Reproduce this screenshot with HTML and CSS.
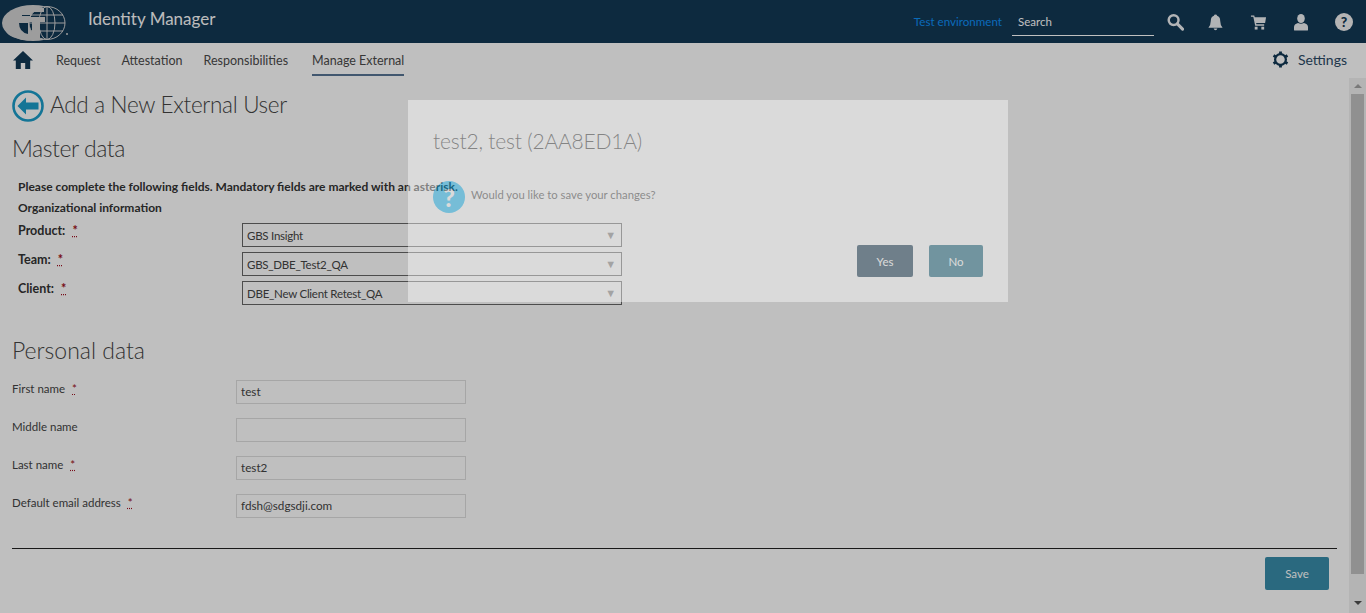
FILE: index.html
```html
<!DOCTYPE html>
<html lang="en">
<head>
    <meta charset="UTF-8">
    <meta name="viewport" content="width=device-width, initial-scale=1.0">
    <title>Identity Manager</title>
    <link rel="stylesheet" href="styles.css">
</head>
<body>
    <header class="topbar">
        <svg class="logo" viewBox="0 0 68 43" aria-hidden="true">
            <ellipse cx="33" cy="23" rx="31" ry="18" fill="#d2d2d2"/>
            <ellipse cx="47" cy="23" rx="18" ry="16.500" fill="#123855"/>
            <g fill="none" stroke="#d2d2d2" stroke-width="1">
                <ellipse cx="47" cy="23" rx="18" ry="16.500"/>
                <ellipse cx="47" cy="23" rx="8" ry="16.500"/>
                <path d="M47 7v32M31 15h32M29 23h36M31 31h32"/>
            </g>
            <path d="M18 8h26v4H30q-12 0-12 11t10 12l3 5q-8 1-15-2Q4 35 4 24 4 13 18 8z" fill="#d2d2d2"/>
            <path d="M20 17h5v-3h6v3h14v5H40v17h-8V22H20z" fill="#d2d2d2"/>
            <path d="M19 23h9v11q-9-2-9-11zM22 15h8v1h-8z" fill="#123855"/>
            <circle cx="67" cy="34" r="1" fill="#d2d2d2"/>
        </svg>
        <span class="app-name">Identity Manager</span>
        <div class="top-right">
            <span class="env">Test environment</span>
            <div class="search">Search</div>
            <svg class="top-icon search-icon" viewBox="0 0 18 18" aria-hidden="true">
                <circle cx="7" cy="7" r="5.200" fill="none" stroke="currentColor" stroke-width="2.600"/>
                <path d="M11 11l5.500 5.500" stroke="currentColor" stroke-width="3.200" stroke-linecap="round"/>
            </svg>
            <svg class="top-icon bell-icon" viewBox="0 0 18 18" aria-hidden="true">
                <path d="M9 1q1.500 0 1.700 1.500 3.300 1 3.300 5.500 0 4 2.500 7H1.500Q4 12 4 8q0-4.500 3.300-5.500Q7.500 1 9 1z" fill="currentColor"/>
                <path d="M7 16h4q-.5 1.800-2 1.800T7 16z" fill="currentColor"/>
            </svg>
            <svg class="top-icon cart-icon" viewBox="0 0 18 18" aria-hidden="true">
                <path d="M1 2h3.500l.5 2h12l-1 6H6.500l.3 1.500H15V13H5.500L3.500 3.500H1z" fill="currentColor"/>
                <rect x="5" y="14" width="3" height="3" fill="currentColor"/>
                <rect x="12" y="14" width="3" height="3" fill="currentColor"/>
            </svg>
            <svg class="top-icon user-icon" viewBox="0 0 14 18" aria-hidden="true">
                <ellipse cx="7" cy="5.500" rx="3.800" ry="4.500" fill="currentColor"/>
                <path d="M0 17v-3q0-3 4-4 3 1.500 6 0 4 1 4 4v3q0 .5-1 .5H1q-1 0-1-.5z" fill="currentColor"/>
            </svg>
            <span class="help-icon">?</span>
        </div>
    </header>

    <nav class="menu">
        <svg class="home" viewBox="0 0 20 18" aria-hidden="true">
            <path d="M10 0l10 9.500h-2.800V18h-5v-6H7.800v6h-5V9.500H0z" fill="#123855"/>
        </svg>
        <a class="menu-item">Request</a>
        <a class="menu-item">Attestation</a>
        <a class="menu-item wide">Responsibilities</a>
        <a class="menu-item active">Manage External</a>
        <div class="settings">
            <svg class="gear" viewBox="0 0 18 18" aria-hidden="true">
                <circle cx="9" cy="9" r="5.700" fill="none" stroke="#123855" stroke-width="2.400"/>
                <path d="M9 .5v3M9 14.500v3M1.600 4.700l2.600 1.500M13.800 11.800l2.600 1.500M1.600 13.300l2.600-1.500M13.800 6.200l2.600-1.500" stroke="#123855" stroke-width="3"/>
            </svg>
            <span>Settings</span>
        </div>
    </nav>

    <div class="body-row">
        <main class="content">
            <div class="page-title">
                <svg class="back" viewBox="0 0 32 32" aria-hidden="true">
                    <circle cx="16" cy="16" r="14.500" fill="none" stroke="#1b9cc9" stroke-width="2.600"/>
                    <path d="M5.500 16L14 7.500v5h12.500v7H14v5z" fill="#1b9cc9"/>
                </svg>
                <h1>Add a New External User</h1>
            </div>

            <h2 class="master">Master data</h2>
            <div class="org">
                <p class="strong">Please complete the following fields. Mandatory fields are marked with an asterisk.</p>
                <p class="strong org-head">Organizational information</p>
                <div class="org-grid">
                    <label class="strong">Product: <abbr title="Mandatory">*</abbr></label>
                    <div class="select"><span>GBS Insight</span><i>▼</i></div>
                    <label class="strong">Team: <abbr title="Mandatory">*</abbr></label>
                    <div class="select"><span>GBS_DBE_Test2_QA</span><i>▼</i></div>
                    <label class="strong">Client: <abbr title="Mandatory">*</abbr></label>
                    <div class="select"><span>DBE_New Client Retest_QA</span><i>▼</i></div>
                </div>
            </div>

            <h2 class="personal">Personal data</h2>
            <div class="person-grid">
                <label>First name <abbr title="Mandatory">*</abbr></label>
                <div class="field">test</div>
                <label>Middle name</label>
                <div class="field"></div>
                <label>Last name <abbr title="Mandatory">*</abbr></label>
                <div class="field">test2</div>
                <label>Default email address <abbr title="Mandatory">*</abbr></label>
                <div class="field">fdsh@sdgsdji.com</div>
            </div>

            <div class="actions">
                <button class="btn save">Save</button>
            </div>
        </main>
        <div class="scrollbar">
            <span class="arrow-up"></span>
            <div class="thumb"></div>
            <span class="arrow-down"></span>
        </div>
    </div>

    <div class="overlay"></div>
    <div class="dialog">
        <h3>test2, test (2AA8ED1A)</h3>
        <div class="question">
            <span class="q-icon">?</span>
            <span class="q-text">Would you like to save your changes?</span>
        </div>
        <div class="dialog-buttons">
            <button class="btn yes">Yes</button>
            <button class="btn no">No</button>
        </div>
    </div>
</body>
</html>
```
FILE: styles.css
```css
* {
    box-sizing: border-box;
}
html, body {
    height: 100%;
}
body {
    margin: 0;
    display: flex;
    flex-direction: column;
    overflow: hidden;
    font-family: "Lato", "Open Sans", sans-serif;
    font-size: 13px;
    color: #333;
    background: #fff;
}
.topbar {
    height: 43px;
    flex: none;
    display: flex;
    align-items: center;
    background: #123855;
    color: #fff;
}
.logo {
    width: 68px;
    height: 43px;
    margin-right: 20px;
}
.app-name {
    font-size: 17px;
    color: #fbfbfb;
    margin-top: -6px;
}
.top-right {
    margin-left: auto;
    display: flex;
    align-items: center;
    height: 100%;
    padding-right: 13px;
}
.env {
    font-size: 11.600px;
    color: #0e8ff5;
    margin-right: 10px;
    margin-top: -1px;
}
.search {
    width: 142px;
    height: 27px;
    margin-top: 1px;
    padding: 6px 6px;
    font-size: 11.500px;
    color: #fff;
    border-bottom: 1px solid #fff;
    margin-right: 13px;
}
.top-icon {
    color: #fff;
    height: 18px;
    flex: none;
    opacity: .93;
}
.search-icon {
    width: 17px;
    margin-right: 23px;
}
.bell-icon {
    width: 17px;
    margin-right: 26px;
}
.cart-icon {
    width: 17px;
    margin-right: 27px;
}
.user-icon {
    width: 14px;
    margin-right: 27px;
}
.help-icon {
    width: 18px;
    height: 18px;
    border-radius: 50%;
    background: #f0f0f0;
    color: #123855;
    font-size: 14px;
    font-weight: 900;
    line-height: 18px;
    text-align: center;
}
.menu {
    height: 35px;
    flex: none;
    display: flex;
    align-items: flex-start;
    padding: 0 19px 0 13px;
    color: #444;
}
.home {
    width: 20px;
    height: 18px;
    margin: 8px 23px 0 0;
}
.menu-item {
    height: 33px;
    margin-right: 21px;
    padding-top: 10px;
    font-size: 12.500px;
    color: #4a4a4a;
}
.menu-item.wide {
    margin-right: 24px;
}
.menu-item.active {
    border-bottom: 2px solid #577495;
}
.settings {
    margin-left: auto;
    display: flex;
    align-items: center;
    gap: 9px;
    margin-top: 8px;
    font-size: 14px;
    color: #2c4a66;
}
.gear {
    width: 17px;
    height: 17px;
}
.body-row {
    flex: 1;
    min-height: 0;
    display: flex;
}
.content {
    flex: 1;
    padding: 12px 12px 0;
}
.page-title {
    display: flex;
    align-items: center;
    gap: 6px;
    height: 32px;
}
.back {
    width: 32px;
    height: 32px;
}
h1, h2, h3 {
    margin: 0;
    font-weight: 300;
}
h1 {
    font-size: 22.500px;
    letter-spacing: -.3px;
    color: #444;
    margin-top: -3px;
}
h2 {
    font-size: 23px;
    color: #444;
}
.master {
    margin-top: 12px;
    line-height: 28px;
    letter-spacing: -.45px;
}
.org {
    padding-left: 6px;
    margin-top: 16px;
}
.org p {
    margin: 0;
    line-height: 17px;
    font-size: 12px;
}
.strong {
    font-weight: 700;
    font-size: 12.500px;
    color: #333;
}
.org-head {
    margin-top: 4px !important;
}
.org-grid {
    display: grid;
    grid-template-columns: 224px 380px;
    grid-auto-rows: 24px;
    row-gap: 5px;
    margin-top: 7px;
}
.org-grid label {
    line-height: 16px;
}
abbr {
    color: #a01020;
    margin-left: 4px;
}
.select {
    display: flex;
    align-items: center;
    justify-content: space-between;
    padding: 1px 5px 0 4px;
    font-size: 11.500px;
    letter-spacing: -.25px;
    color: #444;
    border: 1px solid #666;
}
.select i {
    font-style: normal;
    font-size: 11px;
    color: #808080;
    margin-top: -3px;
}
.personal {
    margin-top: 31px;
    line-height: 28px;
}
.person-grid {
    display: grid;
    grid-template-columns: 224px 230px;
    grid-auto-rows: 24px;
    row-gap: 14px;
    margin-top: 16px;
    font-size: 11.500px;
}
.person-grid label {
    line-height: 17px;
    color: #444;
}
.field {
    height: 24px;
    padding: 1px 4px;
    line-height: 18px;
    font-size: 11.700px;
    border: 1px solid #dedede;
    color: #444;
}
.actions {
    margin-top: 30px;
    padding: 8px 8px 0 0;
    border-top: 1px solid #222;
    display: flex;
    justify-content: flex-end;
}
.btn {
    border: none;
    border-radius: 2px;
    color: #fff;
    font-family: inherit;
    font-size: 11.500px;
}
.save {
    width: 64px;
    height: 33px;
    background: #388daa;
}
.scrollbar {
    width: 17px;
    flex: none;
    display: flex;
    flex-direction: column;
    align-items: center;
    background: #f1f1f1;
}
.arrow-up, .arrow-down {
    width: 0;
    height: 0;
    border-left: 4px solid transparent;
    border-right: 4px solid transparent;
}
.arrow-up {
    margin: 6px 0;
    border-bottom: 4px solid #a3a3a3;
}
.arrow-down {
    margin: auto 0 8px;
    border-top: 4px solid #505050;
}
.thumb {
    flex: none;
    width: 13px;
    height: 480px;
    background: #c1c1c1;
}
.overlay {
    position: fixed;
    inset: 0;
    background: rgba(0, 0, 0, .25);
}
.dialog {
    position: fixed;
    top: 100px;
    left: 408px;
    width: 600px;
    height: 202px;
    padding: 26px 25px 25px;
    display: flex;
    flex-direction: column;
    background: #fff;
    opacity: .42;
}
.dialog h3 {
    font-size: 21px;
    letter-spacing: -.2px;
    line-height: 30px;
    color: #333;
}
.question {
    display: flex;
    align-items: center;
    gap: 6px;
    margin-top: 25px;
    font-size: 11.300px;
    color: #444;
}
.q-text {
    margin-top: -6px;
}
.q-icon {
    width: 32px;
    height: 32px;
    border-radius: 50%;
    background: #11baf8;
    color: #fff;
    font-size: 25px;
    font-weight: 900;
    line-height: 32px;
    text-align: center;
}
.dialog-buttons {
    margin-top: auto;
    display: flex;
    justify-content: flex-end;
    gap: 16px;
}
.yes {
    width: 56px;
    height: 32px;
    background: #002640;
}
.no {
    width: 54px;
    height: 32px;
    background: #055872;
}
```
